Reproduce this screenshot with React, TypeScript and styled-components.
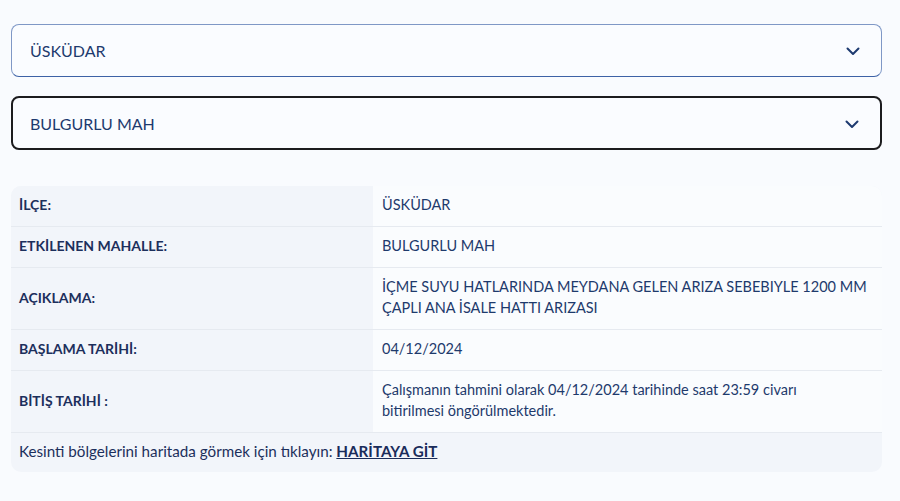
import styled, { createGlobalStyle } from 'styled-components'

const GlobalStyle = createGlobalStyle`
    body {
        margin: 0;
        background: #f9fbfe;
        font-family: Lato, "Noto Sans", sans-serif;
        color: #1d3866;
    }
`

interface Row {
    label: string
    value: string[]
}

// values are split into the lines they wrap to in the original layout
const rows: Row[] = [
    { label: 'İLÇE:', value: ['ÜSKÜDAR'] },
    { label: 'ETKİLENEN MAHALLE:', value: ['BULGURLU MAH'] },
    { label: 'AÇIKLAMA:', value: ['İÇME SUYU HATLARINDA MEYDANA GELEN ARIZA SEBEBIYLE 1200 MM', 'ÇAPLI ANA İSALE HATTI ARIZASI'] },
    { label: 'BAŞLAMA TARİHİ:', value: ['04/12/2024'] },
    { label: 'BİTİŞ TARİHİ :', value: ['Çalışmanın tahmini olarak 04/12/2024 tarihinde saat 23:59 civarı', 'bitirilmesi öngörülmektedir.'] },
]

const Chevron = () => (
    <svg width="16" height="16" viewBox="0 0 16 16" fill="none">
        <path d="M2.5 5.5L8 11l5.5-5.5" stroke="#1d3a70" strokeWidth="2" strokeLinecap="round" strokeLinejoin="round" />
    </svg>
)

const App = () => {
    return (
        <Page>
            <GlobalStyle />
            <Select $focused={false}>
                <span>ÜSKÜDAR</span>
                <Chevron />
            </Select>
            <Select $focused={true}>
                <span>BULGURLU MAH</span>
                <Chevron />
            </Select>

            <InfoTable>
                {rows.map(row => (
                    <TableRow key={row.label}>
                        <LabelCell>{row.label}</LabelCell>
                        <ValueCell>
                            {row.value.map(line => <Line key={line}>{line}</Line>)}
                        </ValueCell>
                    </TableRow>
                ))}
                <Footer>
                    Kesinti bölgelerini haritada görmek için tıklayın: <MapLink href="#">HARİTAYA GİT</MapLink>
                </Footer>
            </InfoTable>
        </Page>
    )
}

const Page = styled.div`
    width: 871px;
    padding: 24px 0 30px 11px;
    display: flex;
    flex-direction: column;
`

const Select = styled.div<{ $focused: boolean }>`
    display: flex;
    align-items: center;
    justify-content: space-between;
    box-sizing: border-box;
    height: ${p => p.$focused ? '54px' : '53px'};
    margin-bottom: ${p => p.$focused ? '36px' : '19px'};
    padding: 0 20px 0 ${p => p.$focused ? '17px' : '18px'};
    border-radius: 8px;
    background: #fafcff;
    font-size: 16px;
    color: #1d3a6e;
    border: ${p => p.$focused ? '2px solid #1c1c1e' : '1px solid #7f98c6'};
    border-bottom-color: ${p => p.$focused ? '#1c1c1e' : '#3d62a6'};

    svg {
        margin-top: 1px;
    }
`

const InfoTable = styled.div`
    display: flex;
    flex-direction: column;
    border-radius: 10px;
    overflow: hidden;
    background: #f2f5fa;
    font-size: 14.5px;
    line-height: 21px;
`

const TableRow = styled.div`
    display: grid;
    grid-template-columns: 362px 1fr;
    border-bottom: 1px solid #e6eaf0;
`

const LabelCell = styled.div`
    display: flex;
    align-items: center;
    padding: 8px 8px 11px 8px;
    background: #f2f5fa;
    font-weight: 700;
    font-size: 14px;
    color: #1c2f5c;
`

const ValueCell = styled.div`
    padding: 8px 12px 11px 9px;
    background: #fafcfe;
    color: #1e3a6c;
`

const Line = styled.div`
    white-space: nowrap;
`

const Footer = styled.div`
    padding: 8px 8px 10px 8px;
    font-size: 15.2px;
    color: #1c2f5c;
`

const MapLink = styled.a`
    color: #1a2c5a;
    font-weight: 700;
    text-decoration: underline;
`

export default App
